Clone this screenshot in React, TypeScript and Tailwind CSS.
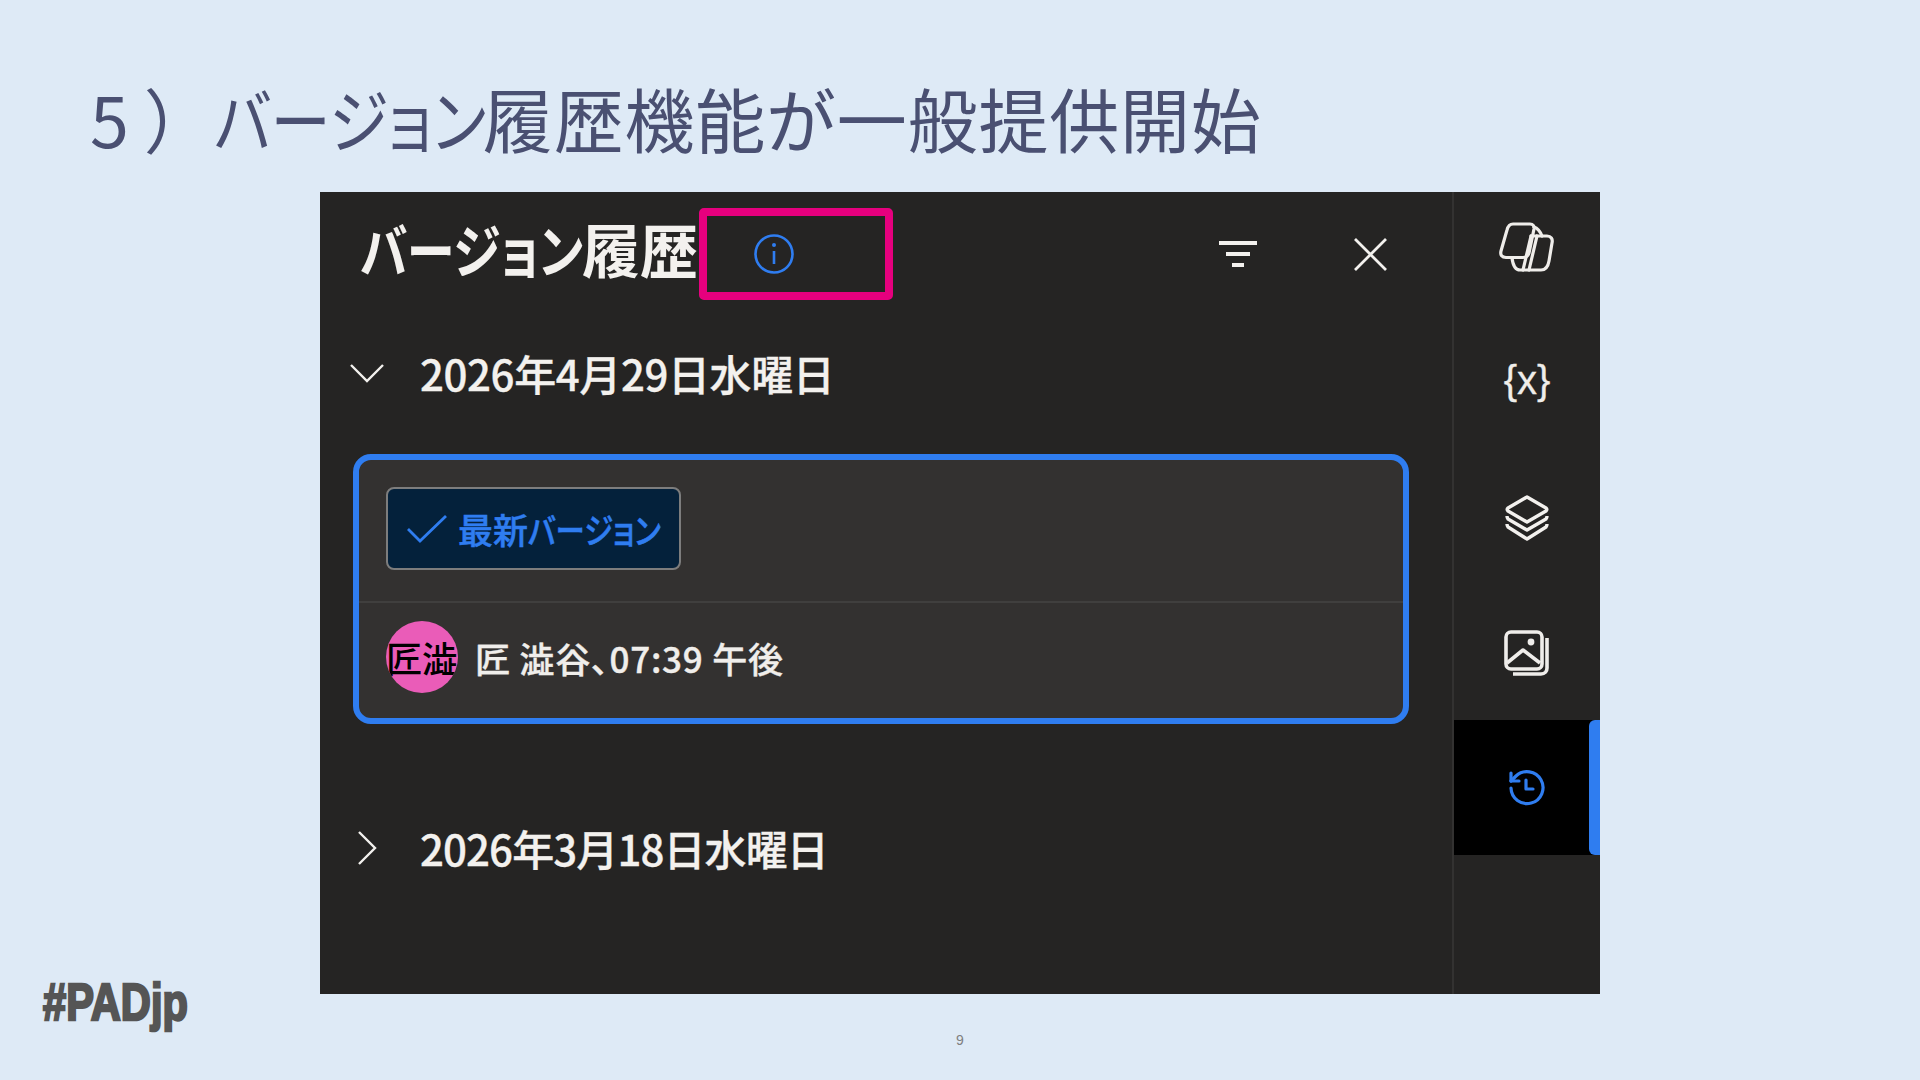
const jp = "font-['Noto_Sans_CJK_JP','Noto_Sans',sans-serif]";
const palt = "[font-feature-settings:'palt']";

// the kana in the slide's font are narrower than Noto's, so squeeze them into a fixed width box
const Kana = ({ text, width }: { text: string; width: string }) => (
  <span className={`inline-block whitespace-nowrap ${width}`}>
    <span className={`inline-block origin-left ${text === "title" ? "scale-x-[0.86]" : text === "head" ? "scale-x-[0.83]" : "scale-x-[0.84]"} ${palt}`}>
      バージョン
    </span>
  </span>
);

const Chevron = ({ d }: { d: string }) => (
  <svg width="36" height="36" viewBox="0 0 36 36" fill="none" stroke="#f3f1ee" strokeWidth="2.4">
    <path d={d} />
  </svg>
);

const RailIcon = ({ active, className, children }: { active?: boolean; className?: string; children: React.ReactNode }) => (
  <div className={`relative flex items-center justify-center ${className ?? "h-[135px]"} ${active ? "bg-black" : ""}`}>
    {children}
    {active && <div className="absolute right-0 top-0 h-full w-[11px] rounded-l-[6px] bg-[#2f7df0]" />}
  </div>
);

const Rail = () => (
  <div className="flex w-[148px] flex-col border-l-2 border-[#333231]">
    <RailIcon className="h-[123px] pb-[13px]">
      <svg width="56" height="50" viewBox="0 0 56 50" fill="none" stroke="#efedea" strokeWidth="3.2" strokeLinejoin="round" strokeLinecap="round">
        <path d="M14 2h17c3 0 4.500 2 4 5l-5 24c-1 3-3 4.500-6 4.500H7c-4 0-6-2.500-5-6.500L8 8c1-4 3-6 6-6z" />
        <path d="M32 14h16c4 0 6 3 5 7l-3 18c-1 6-4 9-8 9H21c-4 0-7-4-8-12" />
        <path d="M35 5c3 1 6 4 8 9M32 14l-8 34M38 14l-8 34" />
      </svg>
    </RailIcon>
    <RailIcon className="h-[135px] pb-[6px]">
      <span className="font-['Liberation_Sans',sans-serif] text-[40px] leading-none text-[#efedea] [-webkit-text-stroke:0.3px_#efedea]">{"{x}"}</span>
    </RailIcon>
    <RailIcon>
      <svg width="44" height="46" viewBox="0 0 44 46" fill="none" stroke="#f3f1ee" strokeWidth="3.4" strokeLinejoin="round">
        <path d="M22 2 41 13c1 1 1 2 0 3L22 27 3 16c-1-1-1-2 0-3z" />
        <path d="M2 21c0 1 0 2 1 3l19 11 19-11c1-1 1-2 1-3" />
        <path d="M2 29c0 1 0 2 1 3l19 12 19-12c1-1 1-2 1-3" />
      </svg>
    </RailIcon>
    <RailIcon>
      <svg width="46" height="46" viewBox="0 0 46 46" fill="none" stroke="#efedea" strokeWidth="3.6" strokeLinejoin="round">
        <rect x="2" y="2" width="36" height="37" rx="5" />
        <path d="M3 33 19 20l17 13" />
        <circle cx="27" cy="12" r="3.400" fill="#efedea" stroke="none" />
        <path d="M43 8v30c0 3-2 6-6 6H9" />
      </svg>
    </RailIcon>
    <RailIcon active>
      <svg width="38" height="38" viewBox="0 0 38 38" fill="none" stroke="#2f7df0" strokeWidth="3.2" strokeLinecap="round" strokeLinejoin="round">
        <path d="M3 19a16 16 0 1 0 5-12L3 12" />
        <path d="M3 4v8h8" />
        <path d="M18 11v9h7" />
      </svg>
    </RailIcon>
  </div>
);

const VersionCard = () => (
  <div className="ml-[33px] mt-[51px] w-[1056px] rounded-[18px] border-[6px] border-[#2f7df0] bg-[#333130]">
    <div className="h-[143px] border-b-2 border-[#403f3e] pl-[27px] pt-[27px]">
      <div className="flex h-[83px] w-[295px] items-center rounded-[8px] border-2 border-[#7d7d7d] bg-[#04213b] pl-[19px]">
        <svg className="shrink-0" width="40" height="28" viewBox="0 0 40 28" fill="none" stroke="#2f7df0" strokeWidth="2.8">
          <path d="M1 14 13 26 39 1" />
        </svg>
        <span className="ml-[11px] whitespace-nowrap text-[35px] font-medium leading-none text-[#2f7df0] [-webkit-text-stroke:0.5px_#2f7df0]">
          最新<Kana text="badge" width="w-[134px]" />
        </span>
      </div>
    </div>
    <div className="flex h-[115px] items-center pb-[7px] pl-[27px]">
      <div className="flex h-[72px] w-[72px] shrink-0 items-center justify-center overflow-hidden rounded-full bg-[#ea5cb8] text-[36px] font-medium leading-none text-black">
        <span className="whitespace-nowrap">匠澁</span>
      </div>
      <span className={`ml-[17px] whitespace-nowrap text-[35px] font-medium leading-none tracking-[0.8px] text-[#f0eeeb] [-webkit-text-stroke:0.4px_#f0eeeb] ${palt}`}>匠 澁谷、07:39 午後</span>
    </div>
  </div>
);

const Panel = () => (
  <div className={`ml-[320px] flex h-[802px] w-[1280px] bg-[#252423] ${jp}`}>
    <div className="flex w-[1132px] flex-col">
      <div className="flex h-[124px] items-center pl-[40px]">
        <h2 className="mb-[12px] w-[339px] whitespace-nowrap text-[58px] font-bold leading-none text-[#f3f1ee]">
          <Kana text="head" width="w-[222px]" />履歴
        </h2>
        <div className="flex h-[92px] w-[194px] items-center rounded-[5px] border-[8px] border-[#e6007e] pl-[46px]">
          <svg width="42" height="42" viewBox="0 0 42 42" fill="none" stroke="#2f7df0" strokeWidth="2.6">
            <circle cx="21" cy="21" r="18.500" />
            <path d="M21 18v13" />
            <circle cx="21" cy="12" r="2" fill="#2f7df0" stroke="none" />
          </svg>
        </div>
        <div className="ml-[326px]">
          <svg width="38" height="26" viewBox="0 0 38 26" fill="none" stroke="#f3f1ee" strokeWidth="3.8">
            <path d="M0 2h38M7 13h24M13 24h12" />
          </svg>
        </div>
        <div className="ml-[97px]">
          <svg width="33" height="33" viewBox="0 0 33 33" fill="none" stroke="#f3f1ee" strokeWidth="2.800">
            <path d="M1 1l31 31M32 1 1 32" />
          </svg>
        </div>
      </div>
      <div className="box-content flex h-[60px] items-center pl-[29px] pt-[27px]">
        <Chevron d="M2 10 18 26 34 10" />
        <span className="ml-[35px] text-[42px] font-medium leading-none tracking-[-0.4px] text-[#f3f1ee] [-webkit-text-stroke:0.3px_#f3f1ee]">2026年4月29日水曜日</span>
      </div>
      <VersionCard />
      <div className="mt-[94px] flex h-[60px] items-center pl-[29px]">
        <Chevron d="M10 2l16 16-16 16" />
        <span className="ml-[35px] text-[42px] font-medium leading-none tracking-[-0.9px] text-[#f3f1ee] [-webkit-text-stroke:0.3px_#f3f1ee]">2026年3月18日水曜日</span>
      </div>
    </div>
    <Rail />
  </div>
);

export default function App() {
  return (
    <div className={`flex h-[1080px] w-[1920px] flex-col overflow-hidden bg-[#deeaf6] ${jp}`}>
      <h1 className="ml-[90px] h-[192px] whitespace-nowrap pt-[72px] text-[70px] font-normal leading-[92px] text-[#4a5072]">
        5<span className="ml-[15px]">）</span>
        <Kana text="title" width="w-[269px]" />
        <span className="tracking-[0.8px]">履歴機能が一般提供開始</span>
      </h1>
      <Panel />
      <div className="relative flex flex-1 items-start justify-center pt-[39px]">
        <span className="font-['Liberation_Sans',sans-serif] text-[14px] leading-none text-[#7f7f7f]">9</span>
        <span className="absolute left-[43px] top-[-18px] origin-left scale-x-[0.8] font-['Liberation_Sans',sans-serif] text-[52px] font-bold leading-none text-[#555555] [-webkit-text-stroke:2.5px_#555555]">
          #PADjp
        </span>
      </div>
    </div>
  );
}
